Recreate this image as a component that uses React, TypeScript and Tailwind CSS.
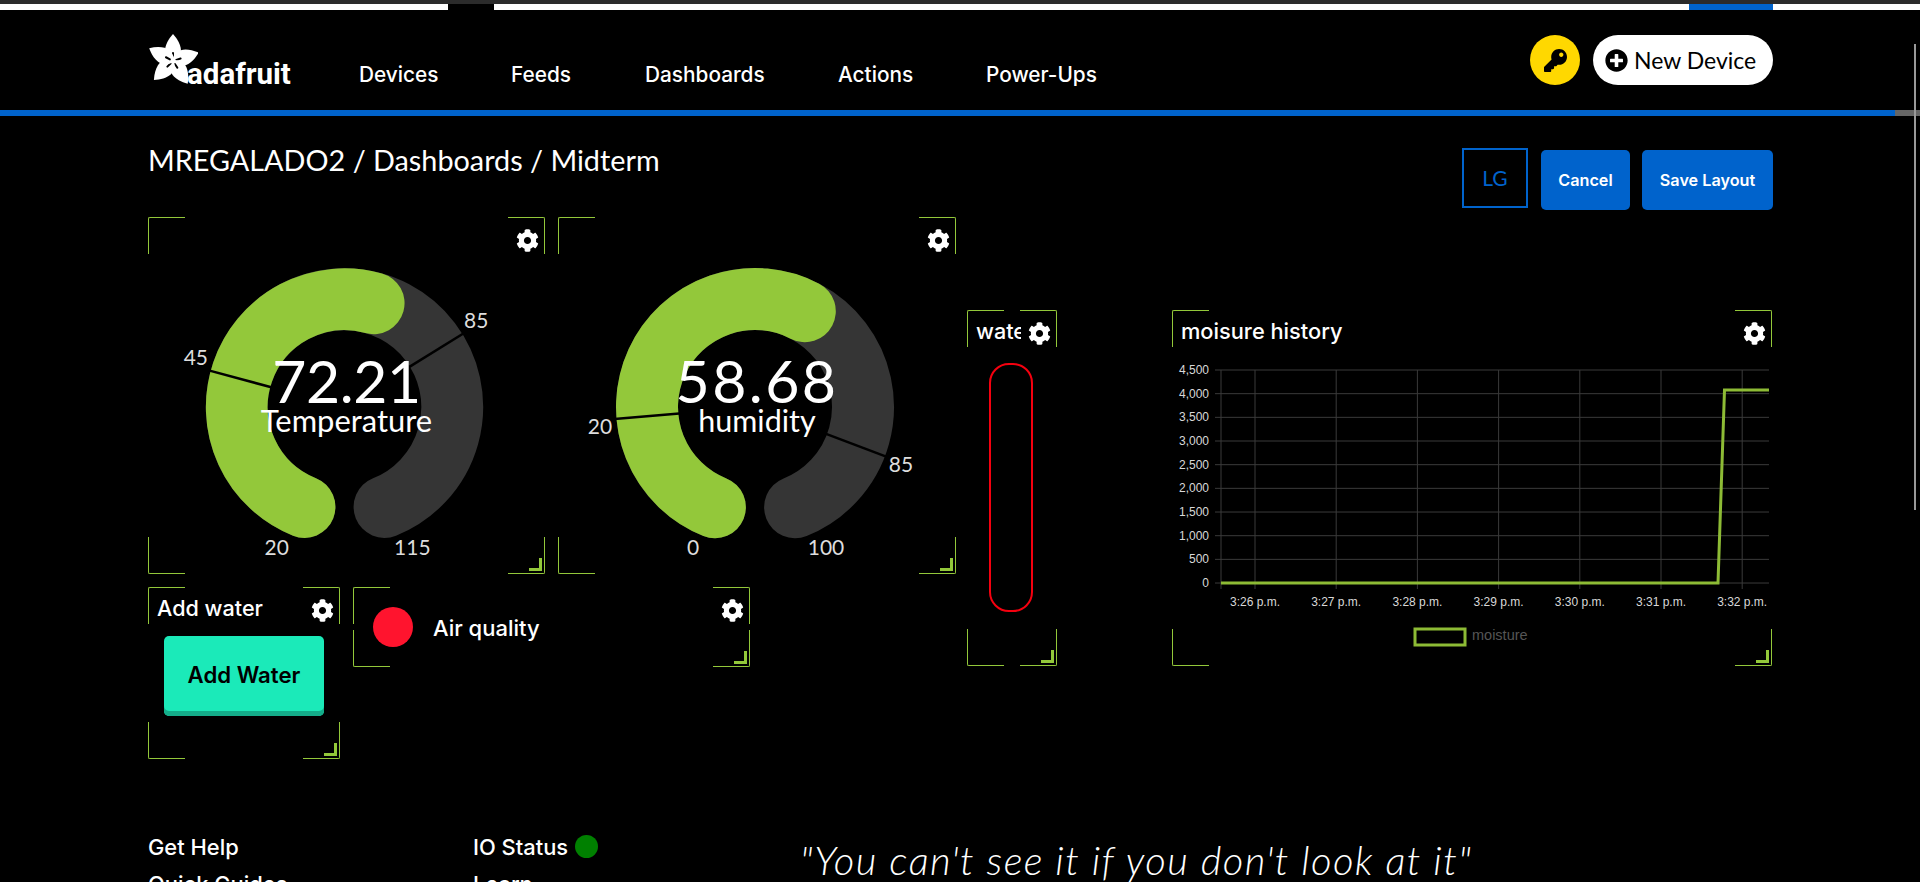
import type { ReactNode } from 'react';
import { FaCog, FaKey, FaPlusCircle } from 'react-icons/fa';

const SANS = 'font-[Lato,"Open_Sans",sans-serif]';
const MEDIUM = 'font-[Inter,sans-serif] font-medium';
const GREEN = '#93c83a';

function polar(cx: number, cy: number, r: number, deg: number) {
  const a = ((deg - 90) * Math.PI) / 180;
  return { x: cx + r * Math.cos(a), y: cy + r * Math.sin(a) };
}

function arcPath(cx: number, cy: number, r: number, from: number, to: number) {
  const s = polar(cx, cy, r, from);
  const e = polar(cx, cy, r, to);
  const large = to - from > 180 ? 1 : 0;
  return `M${s.x} ${s.y}A${r} ${r} 0 ${large} 1 ${e.x} ${e.y}`;
}

function Corners() {
  return (
    <>
      <div className="absolute left-0 top-0 w-[37px] h-[37px] border-l border-t border-[#93c83a] rounded-tl-[2px]" />
      <div className="absolute right-0 top-0 w-[37px] h-[37px] border-r border-t border-[#93c83a] rounded-tr-[2px]" />
      <div className="absolute left-0 bottom-0 w-[37px] h-[37px] border-l border-b border-[#93c83a] rounded-bl-[2px]" />
      <div className="absolute right-0 bottom-0 w-[37px] h-[37px] border-r border-b border-[#93c83a] rounded-br-[2px]" />
      <div className="absolute right-[3px] bottom-[3px] w-[13px] h-[13px] border-r-[3px] border-b-[3px] border-[#93c83a]" />
    </>
  );
}

function Widget({ className, children }: { className: string; children?: ReactNode }) {
  return (
    <div className={`relative shrink-0 ${className}`}>
      {children}
      <Corners />
      <FaCog className="absolute right-[6px] top-[12px] text-white text-[23px]" />
    </div>
  );
}

interface GaugeProps {
  originX: number;
  cx: number;
  value: number;
  valueSpacing: number;
  min: number;
  max: number;
  label: string;
  labelSize: number;
  ticks: { value: number; x: number; y: number }[];
  minX: number;
  maxX: number;
}

function Gauge({ originX, cx, value, valueSpacing, min, max, label, labelSize, ticks, minX, maxX }: GaugeProps) {
  const cy = 407;
  const start = 201.8;
  const sweep = 316.4;
  const angle = (v: number) => start + ((v - min) / (max - min)) * sweep;
  const textX = cx + 2;

  return (
    <svg viewBox={`${originX} 217 398 357`} className="block w-full h-full">
      <path d={arcPath(cx, cy, 108, start, start + sweep)} fill="none" stroke="#353535" strokeWidth="62" strokeLinecap="round" />
      <path d={arcPath(cx, cy, 108, start, angle(value))} fill="none" stroke={GREEN} strokeWidth="62" strokeLinecap="round" />
      {ticks.map((t) => {
        const a = polar(cx, cy, 76, angle(t.value));
        const b = polar(cx, cy, 141, angle(t.value));
        return <line key={t.value} x1={a.x} y1={a.y} x2={b.x} y2={b.y} stroke="#000" strokeWidth="2.5" />;
      })}
      {ticks.map((t) => (
        <text key={t.value} x={t.x} y={t.y} textAnchor="middle" fill="#dddddd" fontSize="21" fontFamily="Lato, sans-serif">
          {t.value}
        </text>
      ))}
      <text x={minX} y={555} textAnchor="middle" fill="#dddddd" fontSize="21" fontFamily="Lato, sans-serif">{min}</text>
      <text x={maxX} y={555} textAnchor="middle" fill="#dddddd" fontSize="21" fontFamily="Lato, sans-serif">{max}</text>
      <text x={textX} y={403} textAnchor="middle" fill="#fff" fontSize="59" letterSpacing={valueSpacing} fontFamily="Lato, sans-serif">{value}</text>
      <text x={textX} y={432} textAnchor="middle" fill="#fff" fontSize={labelSize} fontFamily="Lato, sans-serif">{label}</text>
    </svg>
  );
}

function MoistureChart() {
  const yLabels = ['4,500', '4,000', '3,500', '3,000', '2,500', '2,000', '1,500', '1,000', '500', '0'];
  const xLabels = ['3:26 p.m.', '3:27 p.m.', '3:28 p.m.', '3:29 p.m.', '3:30 p.m.', '3:31 p.m.', '3:32 p.m.'];
  const font = 'Liberation Sans, Arial, sans-serif';
  return (
    <svg viewBox="1172 350 600 316" className="block w-[600px] h-[316px]">
      {yLabels.map((l, i) => {
        const y = 370 + i * 23.67;
        return (
          <g key={l}>
            <line x1="1215" x2="1769" y1={y} y2={y} stroke="#3a3a3a" strokeWidth="1" />
            <text x="1209" y={y + 4} textAnchor="end" fontSize="12" fill="#d8d8d8" fontFamily={font}>{l}</text>
          </g>
        );
      })}
      <line x1="1221" x2="1221" y1="370" y2="589" stroke="#3a3a3a" strokeWidth="1" />
      {xLabels.map((l, i) => {
        const x = 1255 + i * 81.2;
        return (
          <g key={l}>
            <line x1={x} x2={x} y1="370" y2="589" stroke="#3a3a3a" strokeWidth="1" />
            <text x={x} y="606" textAnchor="middle" fontSize="12" fill="#d8d8d8" fontFamily={font}>{l}</text>
          </g>
        );
      })}
      <path d="M1221 583L1718 583L1724.5 390L1769 390" fill="none" stroke="#8dbb35" strokeWidth="3" />
      <rect x="1415" y="629" width="50" height="16" fill="none" stroke="#8dbb35" strokeWidth="3" />
      <text x="1472" y="640" fontSize="14.5" fill="#555555" fontFamily={font}>moisture</text>
    </svg>
  );
}

function Logo() {
  return (
    <div className="flex items-end w-[211px] h-[50px] shrink-0">
      <svg viewBox="-25 -28 50 56" className="w-[50px] h-[56px] -mr-[11px] -mb-[4px] shrink-0">
        {[0, 72, 147, 225, 298].map((r) => (
          <g key={r} transform={`rotate(${r})`}>
            <path d="M0 1C-12 -5 -9 -17 0 -27C9 -17 12 -5 0 1Z" fill="#fff" />
            <line x1="0" y1="-3.5" x2="0" y2="-8" stroke="#000" strokeWidth="2" strokeLinecap="round" />
          </g>
        ))}
      </svg>
      <span className="font-[Roboto,sans-serif] font-bold text-[29.5px] leading-[22px] text-white">adafruit</span>
    </div>
  );
}

const NAV = [
  { label: 'Devices', w: 'w-[152px]' },
  { label: 'Feeds', w: 'w-[134px]' },
  { label: 'Dashboards', w: 'w-[193px]' },
  { label: 'Actions', w: 'w-[148px]' },
  { label: 'Power-Ups', w: 'w-auto' },
];

export default function App() {
  return (
    <div className={`relative w-[1920px] h-[882px] overflow-hidden bg-black text-white ${SANS}`}>
      <div className="h-[4px] bg-[#2b2b2b]" />
      <div className="flex h-[6px]">
        <div className="w-[448px] bg-white" />
        <div className="w-[46px] bg-black" />
        <div className="w-[1195px] bg-white" />
        <div className="w-[84px] bg-[#0063cc]" />
        <div className="flex-1 bg-white" />
      </div>

      <header className="flex items-center justify-between h-[100px] pl-[148px] pr-[147px] py-[10px]">
        <div className="flex items-center">
          <Logo />
          <nav className={`flex items-center pt-[30px] ${MEDIUM}`}>
            {NAV.map((n) => (
              <a key={n.label} className={`${n.w} text-[20.8px] text-white`}>{n.label}</a>
            ))}
          </nav>
        </div>
        <div className="flex items-center gap-[13px]">
          <div className="flex items-center justify-center w-[50px] h-[50px] rounded-full bg-[#ffd800]">
            <FaKey className="text-black text-[23px]" />
          </div>
          <button className="flex items-center gap-[6px] h-[50px] w-[180px] pl-[12px] rounded-full bg-white text-black text-[23px]">
            <FaPlusCircle className="text-[23px]" />
            New Device
          </button>
        </div>
      </header>
      <div className="flex h-[6px]">
        <div className="w-[1895px] bg-[#0063cc]" />
        <div className="flex-1 bg-[#666666]" />
      </div>

      <main className="pl-[148px] pr-[147px]">
        <div className="flex justify-between pt-[32px] h-[94px]">
          <h1 className="text-[28.8px] leading-[24px] font-normal">MREGALADO2 / Dashboards / Midterm</h1>
          <div className="flex items-start gap-[12px]">
            <div className="flex items-center justify-center w-[66px] h-[60px] mr-[1px] border-2 border-[#0063cc] text-[#0063cc] text-[21px]">LG</div>
            <button className="mt-[2px] w-[89px] h-[60px] rounded-[5px] bg-[#0063cc] font-[Inter,sans-serif] text-[16.2px] font-semibold text-white">Cancel</button>
            <button className="mt-[2px] w-[131px] h-[60px] rounded-[5px] bg-[#0063cc] font-[Inter,sans-serif] text-[16.2px] font-semibold text-white">Save Layout</button>
          </div>
        </div>

        <div className="flex items-start mt-[7px]">
          <div className="w-[808px] shrink-0">
            <div className="flex gap-[13px]">
              <Widget className="w-[397px] h-[357px]">
                <Gauge
                  originX={148}
                  cx={345}
                  value={72.21}
                  valueSpacing={-0.4}
                  min={20}
                  max={115}
                  label="Temperature"
                  labelSize={31}
                  minX={277}
                  maxX={413}
                  ticks={[{ value: 45, x: 196, y: 365 }, { value: 85, x: 477, y: 328 }]}
                />
              </Widget>
              <Widget className="w-[398px] h-[357px]">
                <Gauge
                  originX={558}
                  cx={755}
                  value={58.68}
                  valueSpacing={2.4}
                  min={0}
                  max={100}
                  label="humidity"
                  labelSize={30.5}
                  minX={693}
                  maxX={826}
                  ticks={[{ value: 20, x: 600, y: 434 }, { value: 85, x: 901, y: 472 }]}
                />
              </Widget>
            </div>
            <div className="flex gap-[13px] mt-[13px]">
              <Widget className="w-[192px] h-[172px]">
                <div className={`pl-[9px] pt-[7px] text-[21.6px] leading-[28px] ${MEDIUM}`}>Add water</div>
                <button className="relative block ml-[16px] mt-[14px] w-[160px] h-[80px] rounded-[5px] bg-[#1beab9] shadow-[inset_0_-5px_0_#14ad8a] pb-[3px] font-[Inter,sans-serif] text-black text-[22.2px] font-semibold">
                  Add Water
                </button>
              </Widget>
              <Widget className="w-[397px] h-[80px]">
                <div className="flex items-center h-full pl-[20px] gap-[20px]">
                  <div className="w-[40px] h-[40px] rounded-full bg-[#ff142e]" />
                  <span className={`pt-[2px] text-[22px] ${MEDIUM}`}>Air quality</span>
                </div>
              </Widget>
            </div>
          </div>

          <Widget className="w-[90px] h-[356px] mt-[93px] ml-[11px]">
            <div className={`ml-[9px] pt-[7px] w-[45px] overflow-hidden whitespace-nowrap text-[21.6px] leading-[28px] ${MEDIUM}`}>water</div>
            <div className="ml-[22px] mt-[18px] w-[44px] h-[249px] rounded-[20px] border-2 border-[#f5000f]" />
          </Widget>

          <Widget className="w-[600px] h-[356px] mt-[93px] ml-[115px]">
            <div className={`pl-[9px] pt-[7px] h-[40px] text-[21.8px] leading-[28px] ${MEDIUM}`}>moisure history</div>
            <MoistureChart />
          </Widget>
        </div>

        <footer className={`flex mt-[70px] text-[21.9px] leading-[37px] ${MEDIUM}`}>
          <div className="w-[325px]">
            <div>Get Help</div>
            <div>Quick Guides</div>
          </div>
          <div className="w-[327px]">
            <div className="flex items-center gap-[7px]">
              IO Status
              <span className="w-[23px] h-[23px] rounded-full bg-[#008000] -mt-[2px]" />
            </div>
            <div>Learn</div>
          </div>
          <div className="mt-[13px] font-[Lato,sans-serif] text-[40px] tracking-[1.4px] italic font-light whitespace-nowrap">"You can't see it if you don't look at it"</div>
        </footer>
      </main>

      <div className="absolute right-[4px] top-[44px] w-[2px] h-[466px] bg-[#999999]" />
    </div>
  );
}
